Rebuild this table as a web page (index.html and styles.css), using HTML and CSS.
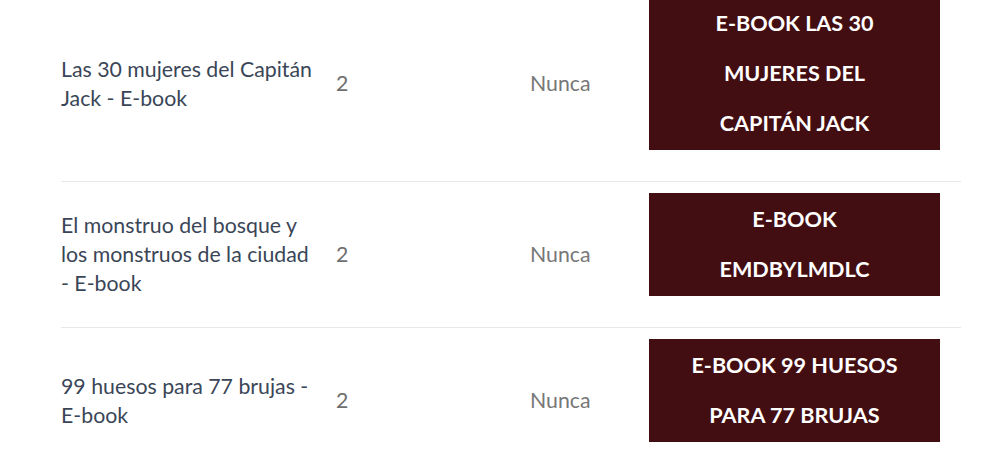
FILE: index.html
```html
<!DOCTYPE html>
<html lang="es">
<head>
<meta charset="utf-8">
<title>Descargas</title>
<link rel="stylesheet" href="styles.css">
</head>
<body>
<div class="wrap">
  <table class="downloads">
    <tbody>
      <tr>
        <td class="c-title">Las 30 mujeres del Capitán Jack - E-book</td>
        <td class="c-qty">2</td>
        <td class="c-exp">Nunca</td>
        <td class="c-file"><a class="btn" href="#">E-book Las 30 mujeres del Capitán Jack</a></td>
      </tr>
      <tr>
        <td class="c-title">El monstruo del bosque y los monstruos de la ciudad - E-book</td>
        <td class="c-qty">2</td>
        <td class="c-exp">Nunca</td>
        <td class="c-file"><a class="btn" href="#">E-book EMDBYLMDLC</a></td>
      </tr>
      <tr>
        <td class="c-title">99 huesos para 77 brujas - E-book</td>
        <td class="c-qty">2</td>
        <td class="c-exp">Nunca</td>
        <td class="c-file"><a class="btn" href="#">E-book 99 huesos para 77 brujas</a></td>
      </tr>
    </tbody>
  </table>
</div>
</body>
</html>
```
FILE: styles.css
```css
html, body {
  margin: 0;
  padding: 0;
  background: #ffffff;
  overflow: hidden;
}
body {
  font-family: Lato, "Open Sans", sans-serif;
}
.wrap {
  padding-left: 61px;
  margin-top: -14px;
}
.downloads {
  width: 900px;
  border-collapse: collapse;
  table-layout: fixed;
}
.downloads tr + tr td {
  border-top: 1px solid #e8e8e8;
}
.downloads td {
  padding: 11px 0;
  vertical-align: middle;
  font-size: 21.3px;
  line-height: 29px;
}
.c-title {
  width: 259px;
  padding-right: 16px !important;
  color: #3a4657;
}
.c-qty {
  width: 194px;
  color: #6e6e6e;
}
.c-exp {
  width: 119px;
  color: #777777;
}
.c-file {
  width: 291px;
  padding-right: 21px !important;
  vertical-align: top !important;
}
.btn {
  display: block;
  margin-bottom: 20px;
  padding: 1px 33px 2px;
  background: #430e12;
  color: #ffffff;
  text-decoration: none;
  text-transform: uppercase;
  text-align: center;
  font-weight: 700;
  font-size: 21.6px;
  line-height: 50px;
}
```
